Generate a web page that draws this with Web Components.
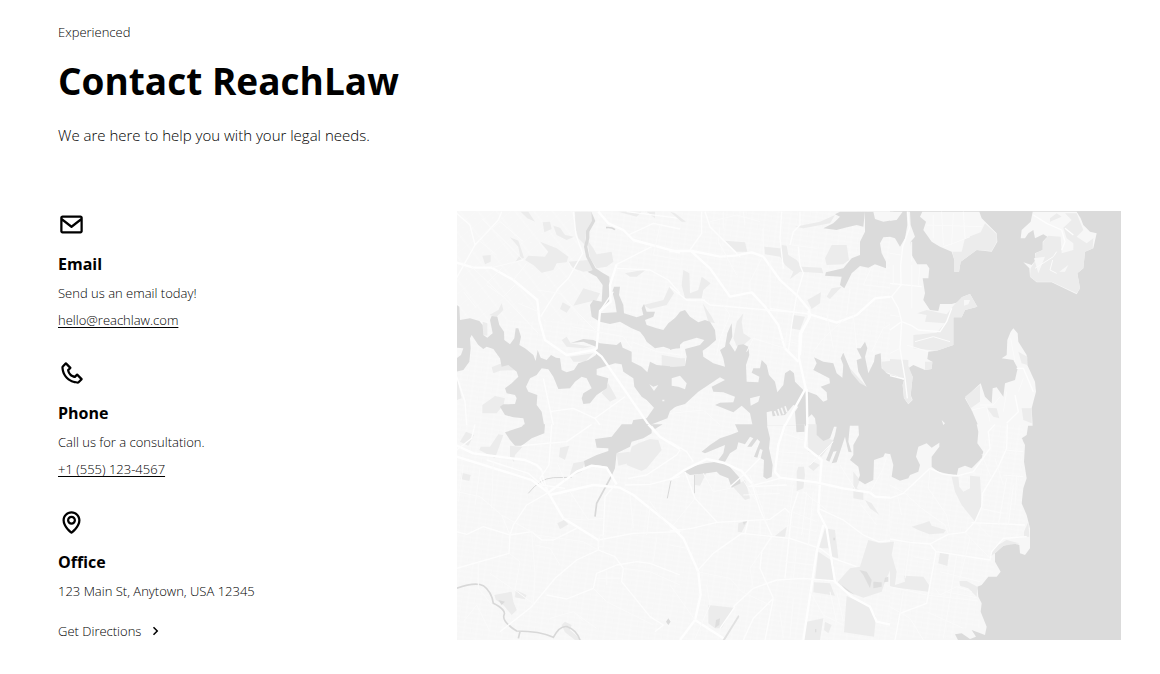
<!DOCTYPE html>
<html lang="en">
<head>
<meta charset="utf-8">
<meta name="viewport" content="width=device-width, initial-scale=1">
<title>Contact ReachLaw</title>
<style>
  body { margin: 0; background: #fff; color: #000; font-family: "Open Sans", "Noto Sans", sans-serif; font-weight: 300; }
</style>
</head>
<body>
<contact-section>
  <section-intro slot="intro">
    <span slot="tagline">Experienced</span>
    <span slot="title">Contact ReachLaw</span>
    <span slot="text">We are here to help you with your legal needs.</span>
  </section-intro>
  <contact-item slot="items" icon="envelope" href="mailto:hello@reachlaw.com">
    <span slot="title">Email</span>
    <span slot="text">Send us an email today!</span>
    <span slot="link">hello@reachlaw.com</span>
  </contact-item>
  <contact-item slot="items" icon="phone" href="tel:+15551234567">
    <span slot="title">Phone</span>
    <span slot="text">Call us for a consultation.</span>
    <span slot="link">+1 (555) 123-4567</span>
  </contact-item>
  <contact-item slot="items" icon="pin">
    <span slot="title">Office</span>
    <span slot="text">123 Main St, Anytown, USA 12345</span>
    <directions-button slot="action">Get Directions</directions-button>
  </contact-item>
  <city-map slot="map"></city-map>
</contact-section>

<script>
const ICONS = {
  envelope: '<path d="M20 4H4c-1.103 0-2 .897-2 2v12c0 1.103.897 2 2 2h16c1.103 0 2-.897 2-2V6c0-1.103-.897-2-2-2zm0 2v.511l-8 6.223-8-6.222V6h16zM4 18V9.044l7.386 5.745a.994.994 0 0 0 1.228 0L20 9.044 20.002 18H4z"/>',
  phone: '<path d="M17.707 12.293a.999.999 0 0 0-1.414 0l-1.594 1.594c-.739-.22-2.118-.72-2.992-1.594s-1.374-2.253-1.594-2.992l1.594-1.594a.999.999 0 0 0 0-1.414l-4-4a.999.999 0 0 0-1.414 0L3.581 5.005c-.38.38-.594.902-.586 1.435.023 1.424.4 6.37 4.298 10.268s8.844 4.274 10.269 4.298h.028c.528 0 1.027-.208 1.405-.586l2.712-2.712a.999.999 0 0 0 0-1.414l-4-4.001zm-.127 6.712c-1.248-.021-5.518-.356-8.873-3.712-3.366-3.366-3.692-7.651-3.712-8.874L7 4.414 9.586 7 8.293 8.293a1 1 0 0 0-.272.912c.024.115.611 2.842 2.271 4.502s4.387 2.247 4.502 2.271a.991.991 0 0 0 .912-.271L17 14.414 19.586 17l-2.006 2.005z"/>',
  pin: '<path d="M12 14c2.206 0 4-1.794 4-4s-1.794-4-4-4-4 1.794-4 4 1.794 4 4 4zm0-6c1.103 0 2 .897 2 2s-.897 2-2 2-2-.897-2-2 .897-2 2-2z"/><path d="M11.42 21.814a.998.998 0 0 0 1.16 0C12.884 21.599 20.029 16.44 20 10c0-4.411-3.589-8-8-8S4 5.589 4 9.995c-.029 6.445 7.116 11.604 7.42 11.819zM12 4c3.309 0 6 2.691 6 6.005.021 4.438-4.388 8.423-6 9.73-1.611-1.308-6.021-5.294-6-9.735 0-3.309 2.691-6 6-6z"/>',
  chevron: '<path d="M10.707 17.707 16.414 12l-5.707-5.707-1.414 1.414L13.586 12l-4.293 4.293z"/>'
};

const define = (name, html, setup) => customElements.define(name, class extends HTMLElement {
  constructor() {
    super();
    const t = document.createElement('template');
    t.innerHTML = html;
    this.attachShadow({ mode: 'open' }).append(t.content.cloneNode(true));
  }
  connectedCallback() { if (setup) setup(this, this.shadowRoot); }
});

define('ui-icon', `
<style>
  :host { display: block; width: var(--size, 27px); height: var(--size, 27px); }
  svg { display: block; width: 100%; height: 100%; fill: currentColor; }
</style>
<svg viewBox="0 0 24 24" aria-hidden="true"></svg>`,
(el, root) => { root.querySelector('svg').innerHTML = ICONS[el.getAttribute('name')] || ''; });

define('contact-section', `
<style>
  :host { display: block; }
  section { padding: 22px 39px 34px 58px; }
  .grid { display: grid; grid-template-columns: 1fr 2fr; gap: 67px; align-items: start; margin-top: 64px; }
  .items { display: grid; gap: 30px; }
  @media (max-width: 700px) { .grid { grid-template-columns: 1fr; } }
</style>
<section>
  <slot name="intro"></slot>
  <div class="grid">
    <div class="items"><slot name="items"></slot></div>
    <slot name="map"></slot>
  </div>
</section>`);

define('section-intro', `
<style>
  :host { display: block; }
  p, h1 { margin: 0; }
  .tagline { font-size: 13px; line-height: 20px; }
  h1 { font-size: 37px; line-height: 48px; margin-top: 15px; font-weight: 700; }
  .text { font-size: 15px; line-height: 24px; margin-top: 18px; }
</style>
<header>
  <p class="tagline"><slot name="tagline"></slot></p>
  <h1><slot name="title"></slot></h1>
  <p class="text"><slot name="text"></slot></p>
</header>`);

define('contact-item', `
<style>
  :host { display: block; }
  h2, p { margin: 0; }
  h2 { font-size: 16px; line-height: 24px; margin-top: 14px; font-weight: 700; }
  p { font-size: 13px; line-height: 20px; margin-top: 7px; }
  a { color: inherit; text-decoration: underline; text-underline-offset: 2px; }
</style>
<ui-icon></ui-icon>
<h2><slot name="title"></slot></h2>
<p><slot name="text"></slot></p>
<p class="link"><a><slot name="link"></slot></a></p>
<slot name="action"></slot>`,
(el, root) => {
  root.querySelector('ui-icon').setAttribute('name', el.getAttribute('icon'));
  root.querySelector('ui-icon').connectedCallback();
  const href = el.getAttribute('href');
  if (href) root.querySelector('a').href = href;
  else root.querySelector('.link')?.remove();
});

define('directions-button', `
<style>
  :host { display: block; margin-top: 20px; }
  button { display: flex; align-items: center; gap: 5px; padding: 0; border: 0; background: none; color: inherit; font: inherit; font-size: 13px; line-height: 20px; cursor: pointer; }
  ui-icon { --size: 18px; }
</style>
<button type="button"><slot></slot><ui-icon name="chevron"></ui-icon></button>`);

/* Greyscale city map: water, land, parks and roads, in six tiles of 660 units. */
define('city-map', `
<style>
  :host { display: block; }
  svg { display: block; width: 100%; height: auto; background: #f7f7f7; }
  .w { fill: #dbdbdb; }
  .l { fill: #f7f7f7; }
  .p { fill: #ececec; }
  .r { fill: none; stroke: #d8d8d8; stroke-width: 5; }
  .s { stroke-width: 3; }
  .a { fill: none; stroke: #fefefe; stroke-width: 7; stroke-linejoin: round; }
  .b { fill: none; stroke: #fdfdfd; stroke-width: 4; stroke-linejoin: round; }
  .c { fill: none; stroke: #fbfbfb; stroke-width: 3; }
</style>
<svg viewBox="0 0 1992 1287" role="img" aria-label="Map of the office location">
  <defs>
    <pattern id="streets" width="38" height="30" patternUnits="userSpaceOnUse" patternTransform="rotate(8)">
      <path d="M0 4H38M0 19H38M6 0V30M25 0V19" fill="none" stroke="#f9f9f9" stroke-width="2"/>
    </pattern>
    <pattern id="slant" width="44" height="32" patternUnits="userSpaceOnUse" patternTransform="rotate(-38)">
      <path d="M0 4H44M0 20H44M6 0V32M29 4V20" fill="none" stroke="#f9f9f9" stroke-width="2"/>
    </pattern>
  </defs>
  <rect width="1992" height="1287" fill="url(#streets)"/>
  <rect width="400" height="330" class="l"/><rect width="400" height="330" fill="url(#slant)"/>
  <rect x="1299" width="693" height="1287" class="w"/>

  <!-- north west -->
  <g transform="translate(-21 -18)">
    <path class="p" d="M212 20L235 20 255 50 232 40ZM270 110L320 130 355 155 350 172 320 175 310 195 275 203 250 180 225 165 235 152 285 155 295 140ZM310 62L330 68 345 90 372 95 350 105 320 90ZM375 20H425L428 55 408 85 405 120 385 100 376 70ZM412 105L430 130 440 148 485 140 490 170 470 185 440 190 420 160ZM355 170L415 165 430 195 400 200 370 190ZM400 250L450 265 440 285 370 302ZM338 292L362 305 350 323 330 312ZM278 52L300 50 305 72 283 82ZM97 152L122 150 122 170 105 178ZM180 97L205 107 222 158 195 172 210 150 205 125ZM525 205L590 193 560 215 540 215ZM658 245L672 265 650 300 600 312 580 300 640 285ZM155 295L160 315 140 335 118 330 145 315ZM98 350L112 355 112 392 100 390ZM335 405L350 395 362 415 425 425 400 430 350 425ZM360 455L430 445 405 470 370 470ZM125 487L165 470 205 470 205 495 150 497 130 505ZM97 600L135 573 165 580 160 600 140 625 97 625ZM20 515L35 580 20 585ZM475 535L500 580 480 590 455 565ZM635 450L690 460 690 485 635 485ZM505 20H575L560 35ZM590 20H615V40Z"/>
    <path class="w" d="M20 300L28 305 30 345 60 340 88 348 98 360 100 390 112 398 128 385 120 345 125 333 142 335 148 360 162 380 163 405 180 418 193 400 197 370 205 370 213 395 208 420 225 430 250 450 257 468 263 435 272 458 290 465 303 450 318 458 330 460 335 495 350 502 372 495 385 475 415 465 438 450 438 425 400 410 362 414 400 402 430 405 450 415 500 420 512 410 518 428 545 440 545 470 575 485 592 502 600 470 620 480 690 487V595L660 618 652 640 600 660 545 660 550 645 590 640 612 608 590 585 575 575 553 545 550 520 520 500 515 478 495 475 440 492 440 510 475 520 470 550 440 570 420 595 400 597 395 580 400 565 425 550 410 520 395 515 375 530 360 550 325 552 310 515 295 493 275 490 260 510 240 520 228 545 235 560 262 570 260 600 275 620 282 660H225L220 640 190 637 165 630 150 605 160 598 195 597 200 580 195 570 170 565 165 550 185 535 205 515 200 500 175 480 155 485 150 460 130 432 110 425 100 432 85 420 65 390 60 400 62 430 58 470 40 495 20 500V460L33 450 40 430 20 428Z"/>
    <path class="w" d="M424 20L436 48 418 80 418 100 412 125 418 155 437 190 455 202 478 215 480 260 478 290 450 318 447 325 500 322 495 290 487 260 492 245 510 245 507 270 520 300 522 325 560 337 580 330 575 310 582 297 590 320 615 320 610 335 585 345 590 360 620 370 640 375 655 355 680 335 690 330V430L660 432 640 425 615 430 590 410 582 395 570 380 545 370 510 350 480 357 450 350 425 335 420 300 430 285 455 290 458 240 440 215 412 200 428 195 408 155 402 125 408 100 408 78 426 48Z"/>
    <path class="r" d="M468 68Q485 66 495 74"/>
    <path class="l" d="M598 538L610 545 625 540 612 558ZM662 535L690 528V555L665 550ZM637 584h6v5h-6Z"/>
    <path class="a" d="M445 20L475 55 520 75 550 105 690 143M20 173L70 188 125 188 190 225 262 285 268 345 285 405 350 450 430 435 455 455 595 658M430 435L440 430 450 318 482 290 480 240 500 178"/>
    <path class="b" d="M20 218L75 120 145 45 155 20M75 120L60 60 20 25M370 20L378 90 398 145 355 220 325 250 272 335M500 178L605 125M500 190L600 195 655 225 690 265M450 318L490 260M20 515L45 590 50 660M280 520L310 660M525 575L435 640 370 610 300 620M435 640L450 660M535 90L610 55 690 72M530 20L690 40"/>
    <path class="c" d="M65 185L170 285 265 385M125 188L220 165 95 40M110 235L155 190M190 225L230 175M355 170L365 190 385 200M262 255L330 265 390 330 435 375M630 60L610 150 690 165M145 45L220 110M150 50L85 105 140 150M195 240L160 275 110 240M205 295L265 320M40 260L80 310M365 365L520 395 545 430M545 410L620 440 690 450"/>
  </g>

  <!-- north centre -->
  <g transform="translate(639 -18)">
    <path class="p" d="M0 20L15 25 48 50 35 50ZM165 107L225 112 232 140 200 140ZM283 125L330 130 335 120 350 122 355 150 380 165 395 185 455 188 460 205 390 200 360 222 370 200 345 180 330 155 285 148ZM485 120L530 120 537 165 520 178 470 180 465 160ZM375 65L450 50 495 30 480 55 400 70ZM412 285L453 262 450 295 425 312ZM370 330L405 335 390 375 362 370ZM40 195L58 205 60 265 85 255 95 215 122 235 100 255 95 280 45 280 35 240ZM470 275L485 250 515 245 480 282ZM200 350L220 325 215 350 220 385 243 400 205 435 190 400ZM98 295L125 335 135 355 115 350ZM0 460H45V485H0ZM635 470L690 465V520L660 505 638 500ZM517 445L540 490 590 545 575 545 520 500Z"/>
    <path class="w" d="M0 355L15 340 30 320 45 315 60 335 85 352 105 345 120 350 135 375 138 405 115 425 98 437 100 455 130 475 165 485 160 460 150 435 165 425 172 385 185 355 187 395 178 415 195 440 205 420 220 418 235 425 238 450 228 480 230 530 265 532 268 515 245 503 250 490 270 490 275 465 290 480 297 510 315 530 322 562 340 540 345 505 360 495 372 505 375 530 400 555 440 570 460 590 472 585 470 562 452 545 480 535 478 520 430 495 440 475 432 457 460 470 490 475 500 505 517 518 520 480 512 460 520 443 535 480 545 505 570 535 590 545 565 500 560 465 575 460 560 430 572 430 585 410 592 430 585 455 595 505 612 470 615 450 632 445 635 490 650 505 662 510V662H248L240 625 215 602 190 622 160 610 135 600 150 593 190 592 195 575 160 562 130 560 125 545 165 525 150 517 85 560 45 597 0 610V487L45 483 50 455 45 432 90 420 103 405 80 398 40 410 20 428 0 435Z"/>
    <path class="w" d="M510 20H662V32L640 50 615 42 610 20H585L580 65 560 60 525 68 500 75 460 70 490 55 510 35 495 28ZM585 20H662V95L640 97 630 115 635 145 648 170V190L615 178 595 188 570 183 545 205 523 250 510 240 515 215 465 212 468 202 520 190 545 160 570 150 570 110 585 80Z"/>
    <path class="l" d="M610 20H670V45L640 50 615 42ZM5 520L30 512 50 535 45 553 25 545 5 542ZM240 580L270 572 265 590 242 602ZM292 662L290 622 305 618 308 634 345 630 370 600 385 605 375 620 378 662ZM411 662L412 640 425 628 435 640 438 662Z"/>
    <path d="M314 618l6 16M324 612l7 20M334 608l7 20M345 604l6 18" stroke="#f7f7f7" stroke-width="5"/>
    <path class="a" d="M-2 138L65 138 150 155 195 152 245 142 280 155 330 225 385 275 418 315 420 335 390 385 387 460 407 550 345 662M410 552L412 662M65 140L120 190 180 275 245 262 285 305 325 360 345 430 385 470M420 328L500 353 560 330 615 280 662 275 690 255"/>
    <path class="a" d="M416 318L417 340 394 385 390 450"/>
    <path class="b" d="M95 20V85L60 135M105 20L120 65 165 110 210 155M335 20L330 100 340 190M390 20L390 60 370 80 360 120M385 125L390 180 400 205 380 270 365 360 355 440M100 285L120 300 410 325M300 310L420 328M0 245L50 285 105 285"/>
    <path class="c" d="M120 50L200 30 270 50M280 70V150M150 65L145 110 200 210M275 160L240 230 240 262M300 170V310M160 300L180 330 150 400 140 450M345 430L250 400 230 440M315 400L380 415M470 325L490 430M550 330L560 430M580 240L690 250M365 120L440 130M160 20V70M220 20L225 60M350 380L345 430M540 250L530 330M605 185L580 240M430 440L460 400 520 345M605 440L640 370 690 340M0 625L100 615 150 660"/>
  </g>

  <!-- north east -->
  <g transform="translate(1299 -18)">
    <path class="l" d="M0 20H38L20 45 0 47ZM0 95L15 100 30 125 45 100 52 60 50 20H60L62 60 75 95 62 110 65 150 82 178 110 178 118 190 115 220 98 220 105 265 100 285 120 315 145 318 150 297 185 297 210 290 215 277 240 267 262 305 225 315 215 337 190 337 190 420 140 437 115 440 112 462 127 470 125 492 105 495 70 480 55 490 68 515 62 570 68 585 55 598 42 580 38 540 42 525 15 512 0 510Z"/>
    <path class="l" d="M97 20L90 35 108 50 100 75 125 110 150 125 185 140 193 165V200H207L212 170 260 135 305 140 322 110 320 85 290 55 275 40 268 20ZM428 20L422 50 395 75 392 100 405 100 415 85 430 75 435 100 460 88 472 95 458 110V135L435 145 437 165 425 180 400 172 418 190 420 215 440 232H485L560 268 570 250 562 205 580 190 585 140 610 130 620 85 600 80 580 60 572 40 560 20Z"/>
    <path class="l" d="M370 370L383 385 385 410 410 450 412 480 435 530 438 560 425 610 428 662H265L245 615 225 580 250 555 272 535 285 575 305 595 308 550 320 547 340 575 345 535 375 525 383 490 370 465 335 460 350 450 352 405 362 380ZM155 645L165 655 160 660Z"/>
    <path class="p" d="M225 100L272 82 285 55 320 88 320 110 305 138 260 135 212 170 207 200H193V165L187 140 215 140ZM520 68L545 45 525 25H560L580 75 560 95 590 115 610 100 608 130 585 140 580 190 562 205 570 250 560 265 485 230 440 230 420 215 422 190 437 165 437 145 458 135 460 110 475 92 512 95 515 145 550 135 550 115 530 100ZM480 50L515 35 500 25 480 40ZM215 277L240 267 262 305 225 315 215 337 190 337V420L140 437 70 430V390L140 383 165 355 105 350 110 330 82 325 110 315 170 328 192 300ZM0 462L55 465 55 482 68 515 62 570 66 585 55 596 42 580 38 540 42 525 15 510 0 508ZM105 470L127 470 125 492 105 495ZM225 575L270 540 270 590 242 610ZM290 608L320 610 328 640 310 635ZM385 440L412 455V480L395 475ZM395 610H425V655L400 645Z"/>
    <path class="l" d="M222 285L240 285 235 298 222 302ZM432 160L465 155 445 205ZM508 200L535 180 525 200Z"/>
    <path class="b" d="M53 20L58 70 38 125 32 180 33 240 5 275 0 275M35 350L30 430 45 520 52 580"/>
    <path class="b" d="M0 235L95 245M5 275L25 310 35 350 0 375M35 350L65 362 85 375 150 380 170 350 185 310M430 30L470 55 515 75 525 110 515 135M525 70L550 90M0 512L42 522M380 490L400 490 430 560M375 570L385 620 350 655"/>
    <path class="c" d="M130 30V100M155 20L160 120M190 25L185 120M220 20L225 100M110 60L275 65M435 190L490 155 500 140M488 165L480 195 500 205M65 110V170M0 145L35 150M10 180V240M65 180V310M90 180L85 240M0 330L30 335M75 410L130 395 180 410M362 400L375 470M350 560L340 620M400 520L385 560M160 125L190 115 240 95M30 430L0 445M50 420L115 440M270 600L310 600 330 575M245 615L290 605 300 650"/>
  </g>

  <!-- south west -->
  <g transform="translate(-21 642)">
    <path class="p" d="M48 20L72 30 55 62 30 50ZM145 28L160 30 135 100 88 75 92 65 120 65ZM180 62L217 66 195 90 192 112 180 95ZM330 68L358 62 345 105 327 95ZM35 143L62 150 58 168 32 162ZM405 108L370 115 358 155 395 140ZM545 65L565 55 600 42 625 45 635 75 590 130 575 138 530 120ZM500 85L540 80 535 115 505 122ZM322 295L342 285 355 298 330 313ZM133 510L185 500 190 530 200 555 185 570 160 540 138 525ZM197 495L230 510 225 523 195 517ZM335 600L345 590 365 600 360 615 395 645H375L345 622Z"/>
    <path class="w" d="M165 22L215 5 222 -2H285L283 25 245 40 215 62 195 62 180 45ZM435 42L485 35 515 -2H605V25L580 40 545 50 540 65 500 85 495 130 485 152 470 125 440 120 405 130 402 108 440 90 475 78 475 70 440 68ZM603 -2H638L615 12ZM145 525L165 530 155 540ZM648 590L655 580 662 590 655 600Z"/>
    <path class="r" d="M20 490Q75 470 100 482Q125 500 130 535Q170 555 162 570Q155 590 200 618Q270 618 310 637Q330 600 352 605Q380 615 390 645M210 620L205 640M485 152L440 235 435 275"/>
    <path class="r s" d="M235 205Q270 160 310 158L365 157M663 165L652 220"/>
    <path class="a" d="M20 95L245 165 295 203 340 280 445 345M20 62L70 85 225 105 260 120 275 135M295 203L380 140 425 122 470 128 500 178M300 210L430 180 510 188 550 210 690 322M595 -2L630 35 690 72"/>
    <path class="b" d="M275 135L280 160 295 203M110 105L235 145 275 180 345 190M445 345L550 325 690 320M20 320L50 328 100 305 180 330 245 320 275 345 310 345 380 310M180 330L177 385 20 430M295 203L230 240 190 300 180 330M445 375L380 405 315 460 245 545 150 620M445 345L445 375 495 395 520 430 515 470 600 575 640 600 615 620M290 510L350 522 430 490 440 445 500 420 560 410 600 415 690 450M495 180L465 215 460 330M525 180L600 178 690 155M535 160L590 150 680 90 690 75M305 -2L297 120 270 160 295 203M425 -2L350 50 215 62M75 -2L65 40 20 75"/>
    <path class="c" d="M85 410V490L130 545M20 200L90 215 155 270 180 330M155 270L260 330 400 350 445 375M245 320L255 450 250 540M340 280L410 285 460 280M360 200L415 285M330 420L300 370 255 360M520 430L600 440 690 480M470 440V480M90 130L75 240M130 110L125 250M40 590L80 540 120 620M370 560L400 590M540 210L550 310M600 245L590 330M450 330H460V365H445ZM440 460H510M120 445L185 490M300 580L370 560 440 610M40 120L25 230M600 230L650 300M620 340L610 410M177 385L210 410 195 495 255 540M430 490L470 530 610 600M325 120L345 170"/>
  </g>

  <!-- south centre -->
  <g transform="translate(639 642)">
    <path class="p" d="M75 150L110 142 90 182 75 180ZM190 187L225 165 240 220 225 225ZM413 -2H440L445 35 490 45 455 95 415 80ZM415 125L430 110 450 120 430 138ZM378 -2H405V20L378 20ZM385 125H402L405 150 400 190 380 198 380 140ZM205 295L233 287 215 322 203 320ZM312 335L350 305 345 335ZM465 310L495 315 505 400 485 395 475 370 447 370ZM445 380L490 410 495 468 435 465ZM432 472L480 475 495 512 430 502ZM595 345L632 355 672 350 665 425 645 470 635 500 580 518 545 505 500 475 540 430 570 425ZM530 513L600 545 618 575 612 635 522 622ZM115 540L190 548 155 610 135 610 115 595ZM400 645L410 590 460 580 450 645ZM465 590L485 600 475 625 462 615ZM550 140L570 165 560 190 580 200 580 225 550 220ZM585 225L605 235 628 270 600 250Z"/>
    <path class="w" d="M195 -2L205 20 180 30 150 40 120 60 95 80 105 85 165 60 160 85 145 105 165 110 180 85 200 72 205 52 225 58 240 35 250 40 232 65 245 65 262 42 270 50 262 70 252 95 262 98 270 72 278 75 272 100 282 105 280 155 290 162 305 155 308 120 297 70 300 40 290 -2ZM378 -2H403L402 20 380 22ZM440 -2V30L460 48 480 40 492 5H500L495 30 480 75 468 105 478 110 490 80 500 78 485 115 500 112 520 50 525 35 535 80 545 82 535 50 540 -2ZM565 -2L567 30 550 60V90L540 105 565 125 570 150 565 165 585 178 610 165 612 105 640 95 645 85 662 88V-2ZM40 137L75 122 105 115 140 110 170 115 210 160 212 175 185 188 175 160 150 150 140 140 110 145 60 150ZM75 150V205H72V150Z"/>
    <path class="w" d="M568 435L590 440 605 465 600 490 580 450ZM610 470L635 472 635 485 610 490ZM645 458L655 455 655 470 642 472ZM515 480L555 510 525 495ZM490 338h5v8h-5ZM138 585L150 580 148 600 135 608ZM205 570L208 575 165 645H158ZM218 290L232 287 222 300ZM435 612h4v10h-4Z" opacity=".8"/>
    <path class="a" d="M0 165L40 137 110 102 165 115 215 138 245 175M345 -2L325 60 315 140 330 158 440 172 520 190 600 203 615 215 690 220M412 -2L405 65 455 105 450 170 445 260 470 310 495 470 545 515 600 545 620 590 690 605M460 300L440 380 400 645M0 300L40 340 85 440 92 510 75 585 30 645M75 585L160 640"/>
    <path class="b" d="M0 318L65 310 140 292 300 283M245 175L270 255 305 330M235 185L330 160M215 325L130 385 80 440M215 325L360 340 450 370M235 285L225 325M385 200L365 260 345 460M300 283L345 250 360 265M310 520L270 430 275 380 305 335M310 520L250 580 220 645M310 520L285 645M190 545L250 490 320 465 400 460 495 468M450 370L490 400 560 425M445 250L520 285 580 330 625 350 690 345M0 50L50 80 70 110M270 100L220 150 180 185M350 180L240 185M45 140L75 220 140 290M195 545L150 610"/>
    <path class="c" d="M325 80L400 85M320 110L400 115M370 180L350 330M410 200L395 330M430 200L415 360M365 260L440 290M350 300L440 320M345 410L430 420M400 200L470 255M80 440L180 460 215 500 300 540M250 490L240 430 300 340M0 480L50 550 75 585M420 500L460 570 520 600M480 500L500 590M500 500L520 590M340 25L400 45M490 50L420 120M510 120L560 200M220 210L330 205M570 235L620 300M660 230V320M100 145L130 200 180 190M0 360L50 370M110 480L120 540 75 640M380 370L370 460M330 560L340 640M370 520L360 640M240 150L280 260 290 300M210 150L260 230M75 220L10 300M270 285V330M600 203L640 130 650 95"/>
  </g>

  <!-- south east -->
  <g transform="translate(1299 642)">
    <path class="l" d="M0 85L10 120 5 155 30 167 55 160 60 150 85 140 90 120 78 95 85 65 110 55 125 68 148 53V65L125 95 125 125 145 140 200 152 205 130 225 122 245 130 275 100 280 80 262 55 265 20 260 -2H415L410 30 395 40 405 60 402 110 410 160 400 190 395 235 410 270 420 310V370L405 390 390 385 388 360 370 355 340 362 315 385V410L332 440 320 455 295 455 275 480 262 485 265 515 275 535 272 560 290 605 285 630 245 615 258 635 240 642 215 625 195 628 205 647H0Z"/>
    <path d="M0 180L150 155 260 140 300 0 400 0 395 240 410 320 310 370 310 440 260 480 270 610 200 610 190 640 0 640Z" fill="url(#streets)"/>
    <path class="p" d="M185 155L205 155 208 185 220 200 240 190V152L270 155 275 245 255 290 215 240 195 200ZM65 305L100 295 118 288 125 302 168 315 160 325 118 328 85 315ZM150 383L177 385 172 423 145 415ZM0 350L12 350 5 390 20 440 15 480 45 470 42 452 100 455 117 480 115 500 0 485ZM208 468L230 468 262 485 260 515 235 490 210 482ZM300 395L315 365 350 345 388 355 340 362 315 385ZM402 320L415 290 418 335 402 335Z"/>
    <path class="b" d="M0 342L60 352 120 357 175 328 225 322 255 290 275 245 278 205 325 125 350 70 352 -2M120 130L160 148 205 152 250 140 300 70 295 20 315 -2M120 357L138 380 110 535 30 565 15 645M138 380L300 405 305 380 340 340 410 335M245 293L405 300M0 220L40 205 120 130"/>
    <path class="c" d="M60 352L45 460M70 395L120 405M200 390L180 520 160 640M240 340L210 460M0 485L110 510 265 528M30 565L40 500M280 100L305 160M340 150L400 155M345 75L400 80M350 160L325 300M370 180L355 300M315 100L340 180M255 290L300 335M270 250L340 265M220 610L110 560M150 440L270 470M165 500L260 518M380 150L375 240M0 545L60 580 100 645M20 200L35 270M225 322L300 400M0 180L45 205 95 250 165 300 175 328M120 130L115 190 170 270 180 320M135 490L150 510 200 485 245 500"/>
  </g>
</svg>`);
</script>
</body>
</html>
